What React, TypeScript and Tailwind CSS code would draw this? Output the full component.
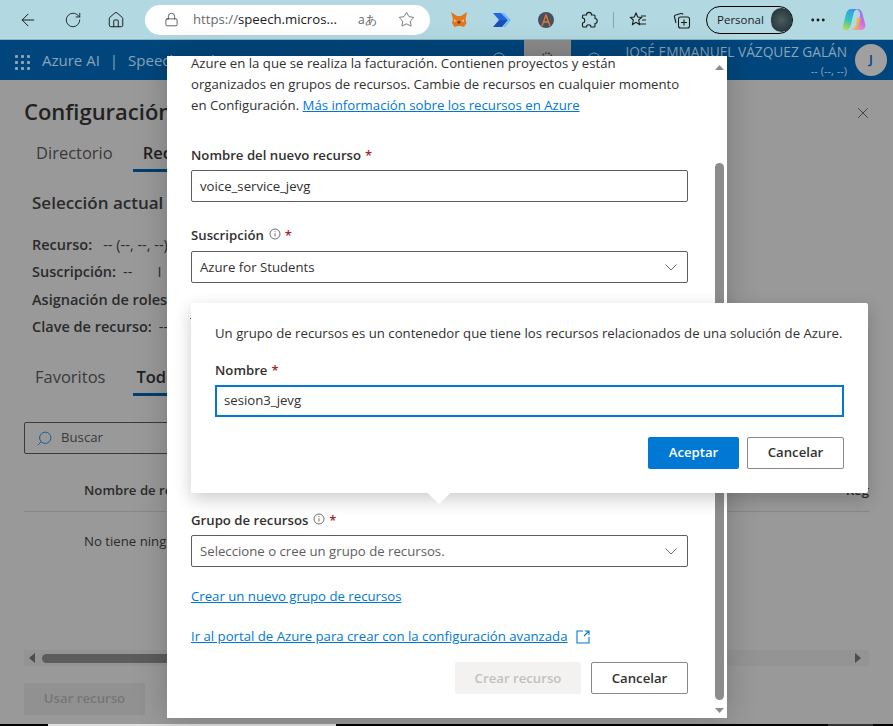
import { ArrowLeft, House, Lock, MoreHorizontal, RotateCw, Search, Star, X } from "lucide-react";

const font = "font-['Open_Sans',sans-serif]";

function Required() {
  return <span className="ml-1 text-[13px] font-semibold text-[#a4262c]">*</span>;
}

function InfoIcon() {
  return (
    <svg width="12" height="12" viewBox="0 0 12 12" fill="none" stroke="#605e5c" strokeWidth="0.9" className="mb-[3px] ml-[5px]">
      <circle cx="6" cy="6" r="5" />
      <path d="M6 5.300v3.200M6 3.200v1" />
    </svg>
  );
}

function FieldLabel({ text, info }: { text: string; info?: boolean }) {
  return (
    <div className="flex h-[20px] items-center text-[13.2px] font-semibold text-[#323130]">
      <span>{text}</span>
      {info && <InfoIcon />}
      <Required />
    </div>
  );
}

function Box({ text, select, muted }: { text: string; select?: boolean; muted?: boolean }) {
  return (
    <div className="flex h-[32px] w-[497px] items-center justify-between rounded-[2px] border border-[#605e5c] pl-2 pr-[10px] text-[13.2px]">
      <span className={muted ? "text-[#605e5c]" : "text-[#323130]"}>{text}</span>
      {select && (
        <svg width="12" height="7" viewBox="0 0 12 7" fill="none" stroke="#605e5c" strokeWidth="0.9">
          <path d="M0.500 0.500L6 6l5.500-5.500" />
        </svg>
      )}
    </div>
  );
}

function Tab({ label, active, pad }: { label: string; active?: boolean; pad: string }) {
  return (
    <div className={`flex h-[38px] items-center ${pad} text-[16.5px] ${active ? "border-b-[3px] border-[#003f6e] pt-[3px] font-semibold text-[#1f1f1f]" : "text-[#3a3a3a]"}`}>
      {label}
    </div>
  );
}

function Row({ label, children }: { label: string; children?: React.ReactNode }) {
  return (
    <div className="flex h-[27.5px] items-center text-[14.5px] text-[#2b2b2b]">
      <span className="font-semibold">{label}</span>
      {children}
    </div>
  );
}

function CopilotIcon() {
  return (
    <svg width="24" height="24" viewBox="0 0 24 24" className="ml-[15px]">
      <defs>
        <linearGradient id="copilot-left" x1="0.6" y1="0" x2="0.3" y2="1">
          <stop offset="0" stopColor="#2f9be8" />
          <stop offset="0.55" stopColor="#35c4c0" />
          <stop offset="1" stopColor="#b7d84a" />
        </linearGradient>
        <linearGradient id="copilot-right" x1="0.7" y1="0" x2="0.3" y2="1">
          <stop offset="0" stopColor="#8f7cf0" />
          <stop offset="0.55" stopColor="#d06be0" />
          <stop offset="1" stopColor="#f39ab0" />
        </linearGradient>
      </defs>
      <path d="M9 1h6.500c-2.500.8-3.500 2.800-4.200 5.500L8.800 17c-.7 3-2.500 5-5 5C1.500 22 .5 20 1 17.500L4 6c.8-3 2.500-5 5-5z" fill="url(#copilot-left)" />
      <path d="M13 1h2.500c2.500 0 4 1.500 4.700 4l3 11c.8 3.300-1 6-4.200 6H11c2.500-.8 3.800-3 4.500-5.500L18 7.500C18.700 4.500 16.500 1.500 13 1z" fill="url(#copilot-right)" />
      <path d="M15 10l4-.5-1.500 6c-.7 3-2.500 5-5 6.500H9.500c2.500-1 4-3 4.700-6z" fill="#f0b23f" opacity="0.85" />
    </svg>
  );
}

function BrowserBar() {
  return (
    <div className="flex h-[40px] items-center border-b border-[#8fb3bc] bg-[#b2d9e2] text-[#1c1c1c]">
      <ArrowLeft size={20} strokeWidth={1.2} className="ml-[18px]" />
      <RotateCw size={18} strokeWidth={1.2} className="ml-[26px]" />
      <House size={18} strokeWidth={1.3} className="ml-[25px]" />
      <div className="ml-[20px] flex h-[30px] w-[285px] items-center rounded-full bg-white pl-[19px] text-[#202020]">
        <Lock size={15} strokeWidth={1.1} />
        <span className="ml-[14px] text-[13.2px]">
          <span className="text-[#6a6a6a]">https://</span>speech.micros...
        </span>
        <span className="ml-[21px] text-[12px] text-[#666]">aあ</span>
        <Star size={17} strokeWidth={1} className="ml-[21px] text-[#444]" />
      </div>
      <svg width="18" height="18" viewBox="0 0 18 18" className="ml-[20px]">
        <path d="M1 1l6 4h4l6-4-1.500 7 1 4-2.500 4-3.500-1H8l-3.500 1L2 12l1-4z" fill="#e2761b" />
        <path d="M7 11l2 2 2-2-2-1z" fill="#5a3a22" />
        <path d="M4 8l3 2-3 1zM14 8l-3 2 3 1z" fill="#f6b98a" />
      </svg>
      <svg width="18" height="14" viewBox="0 0 18 14" className="ml-[25px]">
        <path d="M0 0h8l7 7H6z" fill="#2266e3" />
        <path d="M6 7h9l-6 7H0z" fill="#1a4fb8" />
        <path d="M8 0l8 7-6 7h2l6-7-7-7z" fill="#6db8f5" />
      </svg>
      <div className="ml-[27px] flex h-[16px] w-[16px] items-center justify-center rounded-full bg-[#4a4f5c]">
        <svg width="10" height="12" viewBox="0 0 10 12" fill="none" stroke="#e07b3a" strokeWidth="1.3">
          <path d="M1 12L5 1l4 11M2.500 8h5" />
        </svg>
      </div>
      <svg width="18" height="18" viewBox="0 0 18 18" fill="none" stroke="#1c1c1c" strokeWidth="1.1" className="ml-[26px]">
        <path d="M6.500 4c0-3.500 5-3.500 5 0h2.500a1 1 0 0 1 1 1v2.500c3 0 3 5 0 5V15a1 1 0 0 1-1 1h-3c0-3-4.500-3-4.500 0H3.500a1 1 0 0 1-1-1v-3c3 0 3-5 0-5V5a1 1 0 0 1 1-1z" />
      </svg>
      <div className="ml-[15px] h-[16px] w-px bg-[#86a7b0]" />
      <svg width="18" height="18" viewBox="0 0 18 18" fill="none" stroke="#1c1c1c" strokeWidth="1.1" className="ml-[15px]">
        <path d="M7 2l1.800 4 3.700.4-2.800 2.600.8 4.500L7 11.300 3.500 13.500l.8-4.500L1.500 6.400 5.200 6z" />
        <path d="M12 5h5M13 9h4M11 13h6" />
      </svg>
      <svg width="18" height="18" viewBox="0 0 18 18" fill="none" stroke="#1c1c1c" strokeWidth="1.1" className="ml-[26px]">
        <path d="M3 12L1.500 6c-.3-1 .3-1.800 1.200-2L8 2.500c1-.2 1.800.3 2 1" />
        <rect x="5.500" y="6" width="11" height="11" rx="2" />
        <path d="M11 8.500v6M8 11.500h6" />
      </svg>
      <div className="ml-[15px] flex h-[28px] w-[87px] items-center rounded-full border border-black pl-[10px] text-[11.5px]">
        <span>Personal</span>
        <div className="ml-[7px] h-[24px] w-[24px] rounded-full bg-[radial-gradient(circle,#4b5d62,#1c2a30)]" />
      </div>
      <MoreHorizontal size={18} strokeWidth={1.8} className="ml-[16px]" />
      <CopilotIcon />
    </div>
  );
}

function HeaderRing() {
  return (
    <svg width="14" height="14" viewBox="0 0 14 14" fill="none" stroke="#8aa3b8" strokeWidth="1">
      <circle cx="7" cy="7" r="6" />
    </svg>
  );
}

function PageBehind() {
  return (
    <>
      <div className="flex h-[40px] items-start overflow-hidden bg-[#00467c] text-[#8aa3b8]">
        <svg width="17" height="17" viewBox="0 0 17 17" fill="#8aa3b8" className="ml-[14px] mt-[14px]">
          {[1, 7, 13].flatMap((y) => [1, 7, 13].map((x) => <rect key={`${x}-${y}`} x={x} y={y} width="3" height="3" rx="0.7" />))}
        </svg>
        <span className="ml-[11px] mt-[10px] text-[15px] leading-[20px]">Azure AI</span>
        <span className="ml-[10px] mt-[10px] text-[15px] leading-[20px]">|</span>
        <span className="ml-[10px] mt-[10px] text-[15px] leading-[20px]">Speech Studio</span>
        <div className="ml-auto mr-[6px] flex items-start">
          <div className="mr-[18px] mt-[12px]"><HeaderRing /></div>
          <div className="flex h-[40px] w-[47px] items-start justify-center bg-[#8c8c8c] pt-[10px]">
            <svg width="14" height="14" viewBox="0 0 14 14" fill="none" stroke="#333" strokeWidth="1.2">
              <circle cx="7" cy="8" r="5" strokeDasharray="2 1" />
            </svg>
          </div>
          <div className="ml-[16px] mt-[12px]"><HeaderRing /></div>
          <div className="ml-[25px] mr-[8px] flex flex-col items-end pt-[2px] text-right">
            <span className="text-[13.7px] leading-[20px]">JOSÉ EMMANUEL VÁZQUEZ GALÁN</span>
            <span className="mt-[2px] text-[11px] leading-[14px]">-- (--, --)</span>
          </div>
          <div className="mt-[4px] flex h-[32px] w-[32px] items-center justify-center rounded-full bg-[#a0a0a0] text-[13px] font-semibold text-[#00467c]">J</div>
        </div>
      </div>

      <div className="relative h-[644px] overflow-hidden bg-[#999999] px-6 pt-[15px]">
        <div className="text-[22px] font-semibold leading-[32px] text-[#222]">Configuración</div>
        <X size={18} strokeWidth={1} className="absolute right-[21px] top-[24px] text-[#2a2a2a]" />
        <div className="mt-[7px] flex pl-[2px]">
          <Tab label="Directorio" pad="px-[10px]" />
          <div className="w-[10px]" />
          <Tab label="Recursos" active pad="px-[10px]" />
        </div>
        <div className="ml-2 mt-[19px] text-[17px] font-semibold leading-[24px] text-[#2b2b2b]">Selección actual</div>
        <div className="ml-2 mt-[16px]">
          <Row label="Recurso:"><span className="ml-[11px]">-- (--, --, --)</span></Row>
          <Row label="Suscripción:"><span className="ml-[7px]">--</span><span className="ml-[25px]">I</span></Row>
          <Row label="Asignación de roles:" />
          <Row label="Clave de recurso:"><span className="ml-[7px]">--</span></Row>
        </div>
        <div className="mt-[17px] flex pl-[1px]">
          <Tab label="Favoritos" pad="px-[10px]" />
          <div className="w-[18px]" />
          <Tab label="Todos" active pad="px-[3px]" />
        </div>
        <div className="mt-[26px] flex h-[32px] w-[300px] items-center rounded-[2px] border border-[#3a3a3a] pl-[11px] text-[13.2px] text-[#3a3a3a]">
          <Search size={17} strokeWidth={1.3} className="-scale-x-100 text-[#0f5a94]" />
          <span className="ml-[8px]">Buscar</span>
        </div>
        <div className="mt-[21px] flex h-[37px] items-center justify-between border-b border-[#888] pb-[5px] pl-[60px] text-[13.2px] font-semibold text-[#2b2b2b]">
          <span>Nombre de recurso</span>
          <span>Reg</span>
        </div>
        <div className="mt-[19px] pl-[60px] text-[13.2px] leading-[20px] text-[#2b2b2b]">No tiene ningún recurso</div>
        <div className="mt-[99px] flex h-[16px] items-center bg-[#949494] px-[4px]">
          <svg width="6" height="10" viewBox="0 0 6 10" className="ml-[1px]"><path d="M6 0v10L0 5z" fill="#4d4d4d" /></svg>
          <div className="ml-[7px] h-[9px] w-[500px] rounded-full bg-[#5c5c5c]" />
          <svg width="6" height="10" viewBox="0 0 6 10" className="ml-auto mr-[4px]"><path d="M0 0v10l6-5z" fill="#4d4d4d" /></svg>
        </div>
        <div className="mt-[17px] flex h-[32px] w-[121px] items-center justify-center rounded-[2px] bg-[#919191] text-[13.2px] font-semibold text-[#767676]">
          Usar recurso
        </div>
      </div>

      <div className="flex h-[2px] bg-black">
        <div className="ml-[48px] w-[288px] bg-[#e0e0e0]" />
        <div className="ml-[492px] w-[45px] bg-[#333]" />
      </div>
    </>
  );
}

function ResourceDialog() {
  return (
    <div className="absolute left-[167px] top-[56px] h-[662px] w-[560px] overflow-hidden bg-white shadow-[0_0_30px_rgba(0,0,0,0.22)]">
      <div className="-mt-[3px] pl-[24px] text-[13.2px] leading-[21px] text-[#323130]">
        <p className="w-[510px]">
          Azure en la que se realiza la facturación. Contienen proyectos y están
          <br />
          organizados en grupos de recursos. Cambie de recursos en cualquier momento
          <br />
          en Configuración. <span className="text-[#0078d4] underline">Más información sobre los recursos en Azure</span>
        </p>
        <div className="mt-[29px]"><FieldLabel text="Nombre del nuevo recurso" /></div>
        <div className="mt-[5px]"><Box text="voice_service_jevg" /></div>
        <div className="mt-[23px]"><FieldLabel text="Suscripción" info /></div>
        <div className="mt-[6px]"><Box text="Azure for Students" select /></div>
        <div className="-ml-px mt-[35px] h-px w-[30px] bg-[#0078d4]" />
        <div className="mt-[191px]"><FieldLabel text="Grupo de recursos" info /></div>
        <div className="mt-[5px]"><Box text="Seleccione o cree un grupo de recursos." select muted /></div>
        <div className="mt-[19px] text-[#0078d4] underline">Crear un nuevo grupo de recursos</div>
        <div className="mt-[19px] flex items-center text-[#0078d4]">
          <span className="underline">Ir al portal de Azure para crear con la configuración avanzada</span>
          <svg width="14" height="14" viewBox="0 0 14 14" fill="none" stroke="#0078d4" strokeWidth="1.1" className="ml-[8px]">
            <path d="M7 1H1v12h12V7M8 6l5-5M9 1h4v4" />
          </svg>
        </div>
        <div className="ml-[264px] mt-[15px] flex w-[233px] justify-between text-[13.2px] font-semibold">
          <div className="flex h-[32px] w-[126px] items-center justify-center rounded-[2px] bg-[#f3f2f1] text-[#c2c0be]">Crear recurso</div>
          <div className="flex h-[32px] w-[97px] items-center justify-center rounded-[2px] border border-[#8a8886] text-[#323130]">Cancelar</div>
        </div>
      </div>

      <div className="absolute bottom-0 right-[3px] top-0 flex w-[9px] flex-col items-center">
        <svg width="9" height="5" viewBox="0 0 9 5" className="mt-[9px]"><path d="M4.500 0L9 5H0z" fill="#8c8c8c" /></svg>
        <div className="mt-[93px] h-[537px] w-[9px] rounded-full bg-[#8c8c8c]" />
        <svg width="9" height="5" viewBox="0 0 9 5" className="mt-[8px]"><path d="M0 0h9L4.500 5z" fill="#8c8c8c" /></svg>
      </div>
    </div>
  );
}

function GroupPopover() {
  return (
    <div className="absolute left-[191px] top-[303px] h-[190px] w-[677px] rounded-[2px] bg-white px-[24px] shadow-[0_6px_18px_rgba(0,0,0,0.2)]">
      <p className="mt-[20px] text-[13.2px] leading-[20px] text-[#323130]">
        Un grupo de recursos es un contenedor que tiene los recursos relacionados de una solución de Azure.
      </p>
      <div className="mt-[18px] flex h-[20px] items-center text-[13.2px] font-semibold text-[#323130]">
        <span>Nombre</span>
        <Required />
      </div>
      <div className="mt-[4px] flex h-[32px] items-center border-2 border-[#0078d4] pl-[7px] text-[13.2px] text-[#323130]">sesion3_jevg</div>
      <div className="mt-[20px] flex justify-end gap-2 text-[13.2px] font-semibold">
        <div className="flex h-[32px] w-[91px] items-center justify-center rounded-[2px] bg-[#0078d4] text-white">Aceptar</div>
        <div className="flex h-[32px] w-[97px] items-center justify-center rounded-[2px] border border-[#8a8886] text-[#323130]">Cancelar</div>
      </div>
      <div className="absolute left-[240px] top-[182px] h-[16px] w-[16px] rotate-45 bg-white" />
    </div>
  );
}

export default function App() {
  return (
    <div className={`relative h-[726px] w-[893px] overflow-hidden bg-[#999999] ${font}`}>
      <BrowserBar />
      <PageBehind />
      <ResourceDialog />
      <GroupPopover />
    </div>
  );
}
